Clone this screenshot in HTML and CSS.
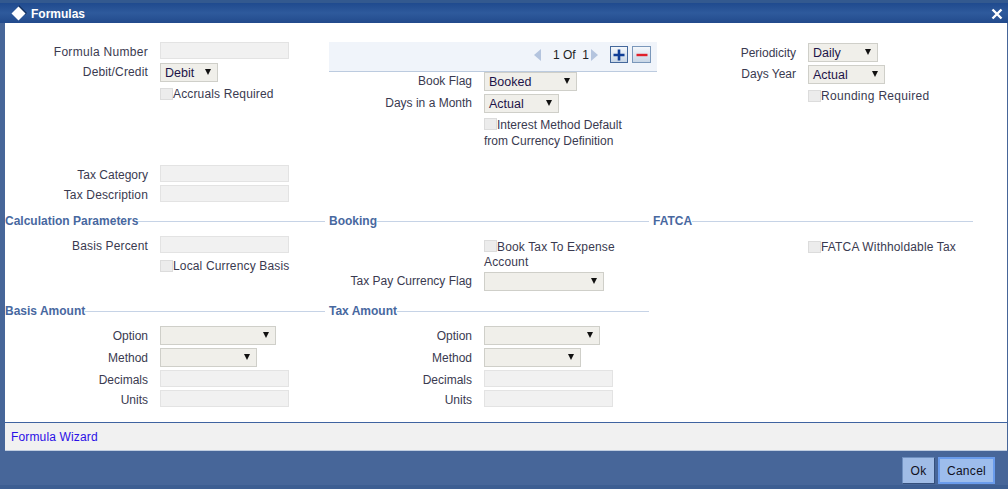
FILE: index.html
```html
<!DOCTYPE html>
<html lang="en">
<head>
<meta charset="utf-8">
<title>Formulas</title>
<link rel="stylesheet" href="styles.css">
</head>
<body>
<div class="window">
  <header class="titlebar">
    <div class="title">
      <svg class="diamond" width="17" height="17" viewBox="0 0 17 17"><path d="M9 0 17 8 15 10 8 3Z" fill="#12305f"/><path d="M8.5 1.5 15.5 8.5 8.5 15.5 1.5 8.5Z" fill="#fff"/></svg>
      <span>Formulas</span>
    </div>
    <svg class="close" width="12" height="12" viewBox="0 0 12 12"><path d="M1.5 1.5 10.5 10.5M10.5 1.5 1.5 10.5" stroke="#fff" stroke-width="2.4"/></svg>
  </header>
  <main class="content">
    <section class="top">
      <div class="col col-a">
        <div class="row row-input"><label class="lbl wide">Formula Number</label><span class="input"></span></div>
        <div class="row row-sel"><label class="lbl mid">Debit/Credit</label><span class="select w58">Debit</span></div>
        <div class="check-row mid"><span class="box"></span><span>Accruals Required</span></div>
        <div class="row row-input tax-first"><label class="lbl">Tax Category</label><span class="input"></span></div>
        <div class="row row-input"><label class="lbl mid">Tax Description</label><span class="input"></span></div>
      </div>
      <div class="col col-b">
        <div class="pager">
          <svg class="tri" width="8" height="12" viewBox="0 0 8 12"><path d="M7 0V12L0 6Z" fill="#b4c4de"/></svg>
          <span class="count">1 Of&nbsp; 1</span>
          <svg class="tri" width="8" height="12" viewBox="0 0 8 12"><path d="M1 0V12L8 6Z" fill="#b4c4de"/></svg>
          <span class="pbtn plus"><svg width="14" height="14" viewBox="0 0 14 14"><path d="M7 1.5V12.5M1.5 7H12.5" stroke="#0f3d96" stroke-width="2.6"/></svg></span>
          <span class="pbtn minus"><svg width="14" height="14" viewBox="0 0 14 14"><path d="M1.5 7H12.5" stroke="#e0202a" stroke-width="2.4"/></svg></span>
        </div>
        <div class="row row-sel"><label class="lbl">Book Flag</label><span class="select w93">Booked</span></div>
        <div class="row row-sel r3"><label class="lbl">Days in a Month</label><span class="select w75">Actual</span></div>
        <div class="check-row wrap"><span class="box"></span><span>Interest Method Default<br>from Currency Definition</span></div>
      </div>
      <div class="col col-c">
        <div class="row row-sel"><label class="lbl lbl-low">Periodicity</label><span class="select w70">Daily</span></div>
        <div class="row row-sel r3"><label class="lbl">Days Year</label><span class="select w77">Actual</span></div>
        <div class="check-row wide"><span class="box"></span><span>Rounding Required</span></div>
      </div>
    </section>

    <section class="band band-one">
      <div class="col">
        <h2 class="legend"><span>Calculation Parameters</span></h2>
        <div class="row row-input"><label class="lbl mid">Basis Percent</label><span class="input"></span></div>
        <div class="check-row mid local"><span class="box"></span><span>Local Currency Basis</span></div>
      </div>
      <div class="col">
        <h2 class="legend"><span>Booking</span></h2>
        <div class="check-row wrap book mid"><span class="box"></span><span>Book Tax To Expense<br>Account</span></div>
        <div class="row row-sel after-book"><label class="lbl">Tax Pay Currency Flag</label><span class="select w120"></span></div>
      </div>
      <div class="col">
        <h2 class="legend end"><span>FATCA</span></h2>
        <div class="check-row book mid"><span class="box"></span><span>FATCA Withholdable Tax</span></div>
      </div>
    </section>

    <section class="band band-two">
      <div class="col">
        <h2 class="legend"><span>Basis Amount</span></h2>
        <div class="row row-sel"><label class="lbl lbl-low">Option</label><span class="select w116"></span></div>
        <div class="row row-sel r2"><label class="lbl lbl-low">Method</label><span class="select w97"></span></div>
        <div class="row row-input r2"><label class="lbl">Decimals</label><span class="input"></span></div>
        <div class="row row-input r2"><label class="lbl">Units</label><span class="input"></span></div>
      </div>
      <div class="col">
        <h2 class="legend end"><span>Tax Amount</span></h2>
        <div class="row row-sel"><label class="lbl lbl-low">Option</label><span class="select w116"></span></div>
        <div class="row row-sel r2"><label class="lbl lbl-low">Method</label><span class="select w97"></span></div>
        <div class="row row-input r2"><label class="lbl">Decimals</label><span class="input"></span></div>
        <div class="row row-input r2"><label class="lbl">Units</label><span class="input"></span></div>
      </div>
    </section>
  </main>
  <div class="linkbar"><a href="#" class="link">Formula Wizard</a></div>
  <footer class="footer">
    <button class="btn ok" type="button">Ok</button>
    <button class="btn cancel" type="button">Cancel</button>
  </footer>
</div>
</body>
</html>
```

FILE: styles.css
```css
* { box-sizing: border-box; }
html, body { margin: 0; padding: 0; }
body {
  width: 1008px;
  height: 489px;
  overflow: hidden;
  font-family: "Liberation Sans", Arial, sans-serif;
  font-size: 12px;
  color: #3a3a50;
}
.wide { letter-spacing: 0.3px; }
.mid { letter-spacing: 0.15px; }
.window {
  width: 1008px;
  height: 489px;
  display: flex;
  flex-direction: column;
  background: #476699;
}
.titlebar {
  height: 23px;
  flex: none;
  display: flex;
  align-items: center;
  justify-content: space-between;
  padding: 1px 5px 0 10px;
  background: linear-gradient(#1f4a8e, #2e5a9c 50%, #224a8c);
  border-top: 3px solid #33598f;
  color: #fff;
}
.title {
  display: flex;
  align-items: center;
  gap: 4px;
  font-weight: bold;
}
.content {
  flex: none;
  height: 400px;
  margin: 0 1px 0 5px;
  background: #fff;
  border-bottom: 1px solid #3f63a0;
}
.top, .band {
  display: grid;
  grid-template-columns: 324px 324px 320px;
}
.top { height: 191px; padding-top: 19px; }
.band-one { height: 90px; }
.band-two { height: 109px; grid-template-columns: 324px 320px; }
.col { display: flex; flex-direction: column; align-items: stretch; }
.row { display: flex; align-items: center; }
.row-input { height: 17px; }
.row-input .lbl { padding-top: 2px; }
.row-sel { height: 19px; margin-top: 4px; }
.row-sel .lbl { padding-bottom: 2px; }
.row-sel .lbl-low { padding-bottom: 0; }
.col-c .row-sel:first-child { margin-top: 1px; }
.lbl {
  width: 143px;
  margin-right: 12px;
  text-align: right;
  flex: none;
}
.input {
  display: block;
  width: 129px;
  height: 17px;
  background: #f1f1f1;
  border: 1px solid #e3e3e3;
}
.select {
  display: block;
  position: relative;
  height: 19px;
  line-height: 18px;
  padding-left: 4px;
  background: #f0efea;
  border: 1px solid #cfcfc9;
  color: #1d1448;
  font-size: 12.5px;
}
.select::after {
  content: "";
  position: absolute;
  right: 6px;
  top: 5px;
  border-left: 3px solid transparent;
  border-right: 3px solid transparent;
  border-top: 6px solid #111;
}
.w58 { width: 58px; }
.w70 { width: 70px; }
.w75 { width: 75px; }
.w77 { width: 77px; }
.w93 { width: 93px; }
.w97 { width: 97px; }
.w116 { width: 116px; }
.w120 { width: 120px; }
.check-row {
  margin: 5px 0 0 155px;
  height: 14px;
  display: flex;
  align-items: center;
}
.box {
  display: block;
  flex: none;
  width: 13px;
  height: 12px;
  background: #ececec;
  border: 1px solid #dcdcdc;
}
.check-row.wrap { display: block; height: auto; line-height: 16px; }
.check-row.wrap .box { display: inline-block; vertical-align: -1px; }
.tax-first { margin-top: 64px; }
.tax-first + .row { margin-top: 3px; }
.pager {
  width: 328px;
  height: 30px;
  background: #f0f4fa;
  border-bottom: 1px solid #bccbdf;
  display: flex;
  align-items: center;
  justify-content: flex-end;
  padding: 0 6px 4px 0;
  color: #222;
}
.count { margin: 0 1px 0 11px; font-size: 12px; }
.pbtn {
  width: 18px;
  height: 17px;
  display: flex;
  align-items: center;
  justify-content: center;
  background: linear-gradient(#f4f7fb, #c8d6e6);
  border: 1px solid #44689c;
}
.plus { margin-left: 12px; }
.minus { margin-left: 4px; width: 19px; border-color: #7a97ba; }
.col-b .pager + .row-sel { margin-top: 0; }
.r3 { margin-top: 3px; }
.col-b .check-row.wrap { margin-top: 4px; }
.col-c .check-row { margin-top: 5px; }
.legend {
  margin: 0;
  height: 14px;
  display: flex;
  align-items: center;
  font-size: 12px;
  font-weight: bold;
  color: #48689f;
}
.legend::after {
  content: "";
  flex: 1;
  height: 1px;
  margin-right: 4px;
  background: #c6d3e6;
}
.legend.end::after { margin-right: 0; }
.band .col > .row-input:nth-child(2) { margin-top: 8px; }
.local { margin-top: 6px; }
.check-row.book { margin-top: 12px; }
.check-row.wrap.book { line-height: 15px; }
.after-book { margin-top: 2px; }
.band-two .row-sel:nth-child(2) { margin-top: 8px; }
.row.r2 { margin-top: 3px; }
.linkbar {
  flex: none;
  height: 28px;
  margin: 0 1px 0 5px;
  padding: 1px 0 0 6px;
  display: flex;
  align-items: center;
  background: #f1f1f1;
  border-bottom: 1px solid #c0cde0;
}
.link { color: #2a10e6; text-decoration: none; letter-spacing: 0.15px; }
.footer {
  flex: 1;
  display: flex;
  justify-content: flex-end;
  align-items: flex-start;
  gap: 3px;
  padding: 6px 13px 0 0;
  border-bottom: 4px solid #3d5e92;
}
.btn {
  height: 27px;
  padding: 0;
  font: 12px "Liberation Sans", Arial, sans-serif;
  letter-spacing: 0.3px;
  color: #101020;
  background: #a0bce6;
  border: 1px solid #6e8fc0;
}
.ok { width: 33px; border-right-color: #35507c; border-bottom-color: #35507c; }
.cancel { width: 57px; background: #9dbdec; border: 2px solid #6a9cec; }
```
